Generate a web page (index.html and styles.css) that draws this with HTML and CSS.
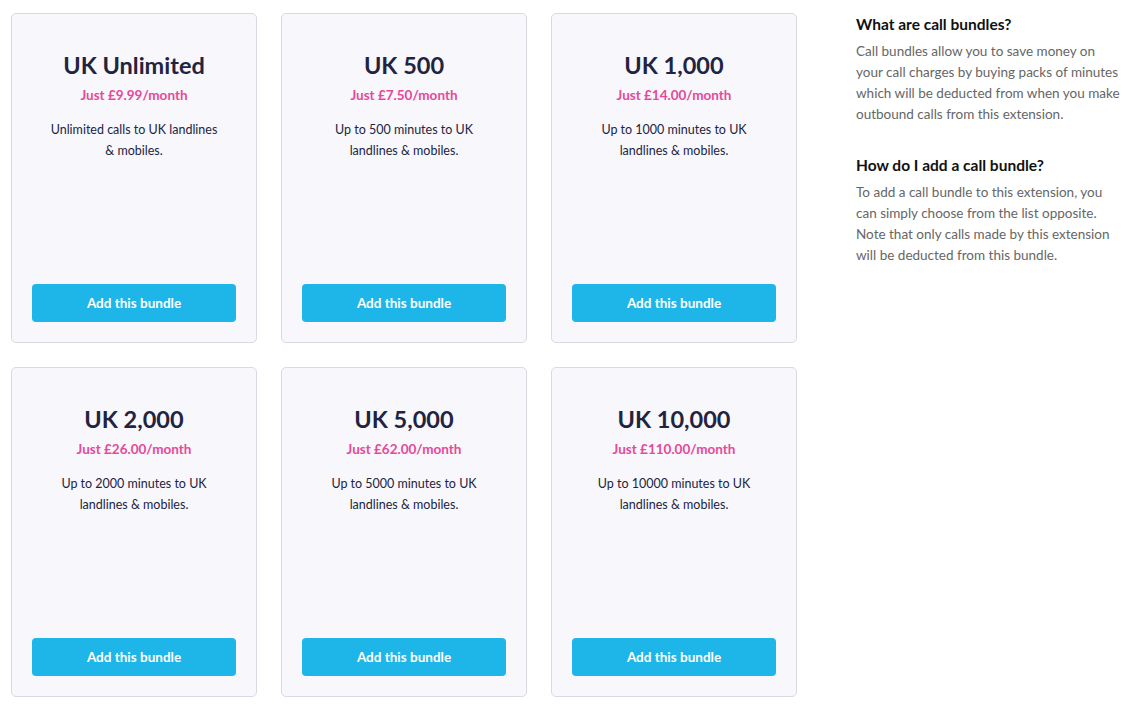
FILE: index.html
```html
<!DOCTYPE html>
<html lang="en">
<head>
<meta charset="utf-8">
<title>Call bundles</title>
<link rel="stylesheet" href="styles.css">
</head>
<body>
<div class="page">
  <div class="grid">
    <div class="card">
      <h2 class="title">UK Unlimited</h2>
      <p class="price">Just £9.99/month</p>
      <p class="desc">Unlimited calls to UK landlines &amp;&nbsp;mobiles.</p>
      <button class="btn">Add this bundle</button>
    </div>
    <div class="card">
      <h2 class="title">UK 500</h2>
      <p class="price">Just £7.50/month</p>
      <p class="desc">Up to 500 minutes to UK landlines &amp;&nbsp;mobiles.</p>
      <button class="btn">Add this bundle</button>
    </div>
    <div class="card">
      <h2 class="title">UK 1,000</h2>
      <p class="price">Just £14.00/month</p>
      <p class="desc">Up to 1000 minutes to UK landlines &amp;&nbsp;mobiles.</p>
      <button class="btn">Add this bundle</button>
    </div>
    <div class="card">
      <h2 class="title">UK 2,000</h2>
      <p class="price">Just £26.00/month</p>
      <p class="desc">Up to 2000 minutes to UK landlines &amp;&nbsp;mobiles.</p>
      <button class="btn">Add this bundle</button>
    </div>
    <div class="card">
      <h2 class="title">UK 5,000</h2>
      <p class="price">Just £62.00/month</p>
      <p class="desc">Up to 5000 minutes to UK landlines &amp;&nbsp;mobiles.</p>
      <button class="btn">Add this bundle</button>
    </div>
    <div class="card">
      <h2 class="title">UK 10,000</h2>
      <p class="price">Just £110.00/month</p>
      <p class="desc">Up to 10000 minutes to UK landlines &amp;&nbsp;mobiles.</p>
      <button class="btn">Add this bundle</button>
    </div>
  </div>
  <aside class="info">
    <h3 class="info-title">What are call bundles?</h3>
    <p class="info-text">Call bundles allow you to save money on your call charges by buying packs of minutes which will be deducted from when you make outbound calls from this extension.</p>
    <h3 class="info-title">How do I add a call bundle?</h3>
    <p class="info-text">To add a call bundle to this extension, you can simply choose from the list opposite. Note that only calls made by this extension will be deducted from this bundle.</p>
  </aside>
</div>
</body>
</html>
```
FILE: styles.css
```css
* { box-sizing: border-box; }
html, body { margin: 0; padding: 0; background: #ffffff; }
body {
  font-family: "Lato", "Noto Sans", sans-serif;
  color: #22243f;
}
.page {
  display: flex;
  align-items: flex-start;
  padding: 13px 0 0 11px;
  gap: 59px;
}
.grid {
  display: grid;
  grid-template-columns: repeat(3, 246px);
  column-gap: 24px;
  row-gap: 24px;
}
.card {
  height: 330px;
  background: #f7f7fc;
  border: 1px solid #d9d9e4;
  border-radius: 5px;
  display: flex;
  flex-direction: column;
  align-items: center;
  padding: 36px 20px 20px;
  text-align: center;
}
.title {
  margin: 0;
  font-size: 23.5px;
  line-height: 30px;
  font-weight: 700;
  color: #22243f;
}
.price {
  margin: 4px 0 0;
  font-size: 13.5px;
  line-height: 22px;
  font-weight: 700;
  color: #e6499a;
}
.desc {
  margin: 13px 0 0;
  max-width: 182px;
  font-size: 12.5px;
  line-height: 21px;
  color: #22243f;
}
.btn {
  margin-top: auto;
  width: 204px;
  height: 38px;
  border: none;
  border-radius: 4px;
  background: #1eb6e8;
  color: #ffffff;
  font-family: inherit;
  font-size: 13.5px;
  font-weight: 700;
}
.info {
  width: 265px;
  padding-top: 1px;
}
.info-title {
  margin: 0;
  font-size: 15.5px;
  line-height: 20px;
  font-weight: 700;
  color: #111111;
}
.info-text {
  margin: 7px 0 30px;
  font-size: 13.5px;
  line-height: 21px;
  color: #666666;
}
```
